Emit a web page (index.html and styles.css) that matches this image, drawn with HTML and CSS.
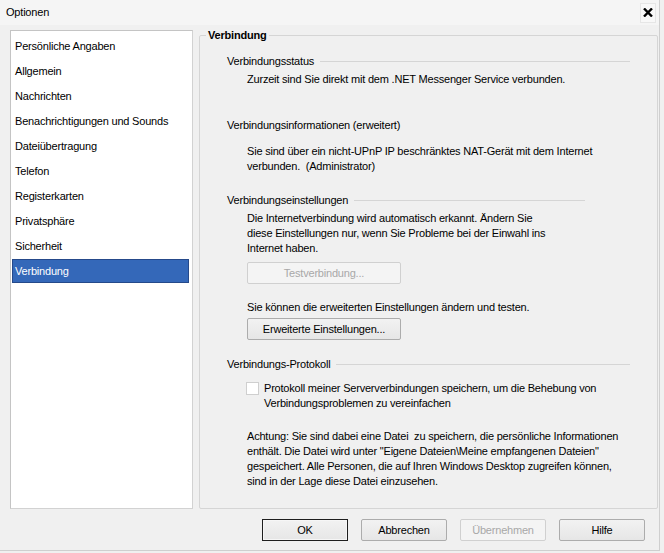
FILE: index.html
```html
<!DOCTYPE html>
<html lang="de">
<head>
<meta charset="utf-8">
<title>Optionen</title>
<link rel="stylesheet" href="styles.css">
</head>
<body>
<div class="window">
  <div class="titlebar">
    <span class="title">Optionen</span>
    <span class="close"><svg width="10" height="9" viewBox="0 0 10 9"><path d="M1 0.5 L9 8.5 M9 0.5 L1 8.5" stroke="#000" stroke-width="2.4"/></svg></span>
  </div>
  <div class="body">
    <ul class="nav">
      <li>Persönliche Angaben</li>
      <li>Allgemein</li>
      <li>Nachrichten</li>
      <li>Benachrichtigungen und Sounds</li>
      <li>Dateiübertragung</li>
      <li>Telefon</li>
      <li>Registerkarten</li>
      <li>Privatsphäre</li>
      <li>Sicherheit</li>
      <li class="selected">Verbindung</li>
    </ul>
    <fieldset class="group">
      <legend>Verbindung</legend>
      <div class="group-body">
        <div class="head h1"><span>Verbindungsstatus</span></div>
        <p class="text p1">Zurzeit sind Sie direkt mit dem .NET Messenger Service verbunden.</p>
        <div class="head h2 noline"><span>Verbindungsinformationen (erweitert)</span></div>
        <p class="text p2">Sie sind über ein nicht-UPnP IP beschränktes NAT-Gerät mit dem Internet<br>verbunden.&nbsp; (Administrator)</p>
        <div class="head h3 short"><span>Verbindungseinstellungen</span></div>
        <p class="text p3">Die Internetverbindung wird automatisch erkannt. Ändern Sie<br>diese Einstellungen nur, wenn Sie Probleme bei der Einwahl ins<br>Internet haben.</p>
        <button class="btn wide disabled b1" disabled>Testverbindung...</button>
        <p class="text p4">Sie können die erweiterten Einstellungen ändern und testen.</p>
        <button class="btn wide b2">Erweiterte Einstellungen...</button>
        <div class="head h4"><span>Verbindungs-Protokoll</span></div>
        <label class="check">
          <span class="box"></span>
          <span class="check-text">Protokoll meiner Serververbindungen speichern, um die Behebung von<br>Verbindungsproblemen zu vereinfachen</span>
        </label>
        <p class="text p5">Achtung: Sie sind dabei eine Datei&nbsp; zu speichern, die persönliche Informationen<br>enthält. Die Datei wird unter "Eigene Dateien\Meine empfangenen Dateien"<br>gespeichert. Alle Personen, die auf Ihren Windows Desktop zugreifen können,<br>sind in der Lage diese Datei einzusehen.</p>
      </div>
    </fieldset>
  </div>
  <div class="footer">
    <button class="btn default">OK</button>
    <button class="btn">Abbrechen</button>
    <button class="btn disabled" disabled>Übernehmen</button>
    <button class="btn">Hilfe</button>
  </div>
</div>
</body>
</html>
```

FILE: styles.css
```css
html, body {
  margin: 0;
  padding: 0;
  background: #f0f0f0;
}
body {
  font-family: "Liberation Sans", Arial, sans-serif;
  font-size: 11px;
  line-height: 15px;
  letter-spacing: -0.2px;
  color: #000;
}
.window {
  width: 660px;
  height: 551px;
  box-sizing: border-box;
  border-right: 1px solid #cfcfcf;
  border-bottom: 1px solid #cfcfcf;
  display: flex;
  flex-direction: column;
}
.titlebar {
  height: 25px;
  flex: none;
  display: flex;
  align-items: center;
  justify-content: space-between;
  padding: 0 3px 0 6px;
  background: #f5f5f5;
}
.title {
  font-size: 11px;
}
.close {
  width: 14px;
  height: 18px;
  display: flex;
  align-items: center;
  justify-content: center;
  background: #f8f8f8;
  border: 1px solid #e6e6e6;
}
.close svg {
  display: block;
}
.body {
  display: flex;
  align-items: flex-start;
  padding: 3px 0 0 10px;
}
.nav {
  list-style: none;
  margin: 2px 0 0 0;
  padding: 3px 0 0 0;
  width: 183px;
  height: 479px;
  box-sizing: border-box;
  background: #fff;
  border: 1px solid #d2d2d2;
  border-top-color: #c4c4c4;
  border-left-color: #c4c4c4;
}
.nav li {
  height: 25px;
  line-height: 25px;
  padding-left: 3px;
  margin: 0 3px 0 1px;
  white-space: nowrap;
}
.nav li.selected {
  background: #3468b9;
  color: #fff;
  height: 24px;
  line-height: 24px;
  box-shadow: inset 0 0 0 1px #25498a;
}
.group {
  margin: 0 0 0 6px;
  padding: 0;
  width: 459px;
  height: 481px;
  box-sizing: border-box;
  border: 1px solid #d5d5d5;
  border-radius: 2px;
  min-width: 0;
}
.group legend {
  margin-left: 6px;
  padding: 0 2px;
  font-weight: bold;
  font-size: 11px;
  line-height: 15px;
}
.group-body {
  padding: 0 27px 0 27px;
}
.head {
  display: flex;
  align-items: center;
  white-space: nowrap;
}
.head::after {
  content: "";
  flex: 1;
  height: 1px;
  margin-left: 6px;
  background: #d5d5d5;
}
.head.noline::after {
  display: none;
}
.head.short {
  margin-right: 45px;
}
.text {
  margin: 0;
  padding-left: 20px;
  white-space: nowrap;
}
.h1 { margin-top: 11px; }
.p1 { margin-top: 3px; }
.h2 { margin-top: 31px; }
.p2 { margin-top: 11px; }
.h3 { margin-top: 19px; }
.p3 { margin-top: 3px; }
.b1 { margin-top: 6px; }
.p4 { margin-top: 16px; }
.b2 { margin-top: 3px; }
.h4 { margin-top: 17px; }
.check { margin-top: 9px; }
.p5 { margin-top: 18px; }

.btn {
  display: block;
  width: 86px;
  height: 22px;
  box-sizing: border-box;
  padding: 0;
  font-family: inherit;
  font-size: 11px;
  letter-spacing: -0.2px;
  color: #000;
  background: linear-gradient(#f2f2f2, #e6e6e6);
  border: 1px solid #acacac;
  border-radius: 2px;
}
.btn.wide {
  width: 154px;
  margin-left: 20px;
}
.btn.disabled {
  color: #a8a8a8;
  background: #f4f4f4;
  border-color: #d0d0d0;
}
.btn.default {
  border-color: #1e1e1e;
  border-radius: 0;
  box-shadow: inset 0 0 0 1px #f6f6f6;
}
.check {
  display: flex;
  align-items: flex-start;
  padding-left: 19px;
}
.box {
  width: 13px;
  height: 13px;
  box-sizing: border-box;
  flex: none;
  margin-top: 1px;
  background: #fff;
  border: 1px solid #cfcfcf;
}
.check-text {
  margin-left: 5px;
  white-space: nowrap;
}
.footer {
  display: flex;
  justify-content: flex-end;
  gap: 13px;
  margin-top: 10px;
  padding-right: 14px;
}
```
